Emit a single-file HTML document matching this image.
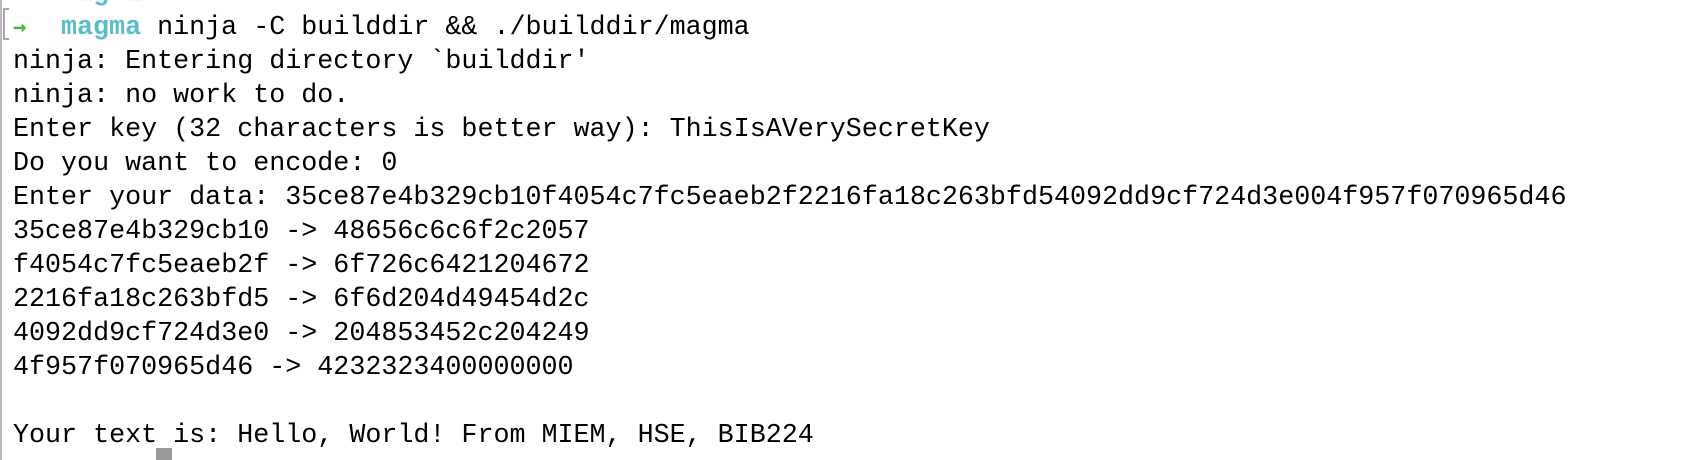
<!DOCTYPE html>
<html><head><meta charset="utf-8"><style>
html,body{margin:0;padding:0;background:#fff;width:1682px;height:460px;overflow:hidden;position:relative}
.t{position:absolute;left:13px;font-family:"Liberation Mono",monospace;font-size:26.7px;line-height:34px;color:#000;white-space:pre}
.l{position:absolute;left:0;top:0;width:2px;height:460px;background:#bbb}
.cy{color:#5bbccb;font-weight:bold}
.gr{color:#4bb43c;font-weight:bold;display:inline-block;width:16px;font-family:"DejaVu Sans Mono",monospace;font-size:22px}
.br{position:absolute;left:3px;top:8px;width:6px;height:32px;border:2px solid #aaa;border-right:none;box-sizing:border-box}
.cur{position:absolute;left:156px;top:448px;width:16px;height:12px;background:#9a9a9a}
</style></head><body>
<div class="l"></div>
<div class="br"></div>
<div class="t" style="top:-23px"><span class="gr">→</span>  <span class="cy">magma</span></div>
<div class="t" style="top:11px"><span class="gr">→</span>  <span class="cy">magma</span> ninja -C builddir &amp;&amp; ./builddir/magma
ninja: Entering directory `builddir'
ninja: no work to do.
Enter key (32 characters is better way): ThisIsAVerySecretKey
Do you want to encode: 0
Enter your data: 35ce87e4b329cb10f4054c7fc5eaeb2f2216fa18c263bfd54092dd9cf724d3e004f957f070965d46
35ce87e4b329cb10 -&gt; 48656c6c6f2c2057
f4054c7fc5eaeb2f -&gt; 6f726c6421204672
2216fa18c263bfd5 -&gt; 6f6d204d49454d2c
4092dd9cf724d3e0 -&gt; 204853452c204249
4f957f070965d46 -&gt; 4232323400000000

Your text is: Hello, World! From MIEM, HSE, BIB224</div>
<div class="cur"></div>
</body></html>
